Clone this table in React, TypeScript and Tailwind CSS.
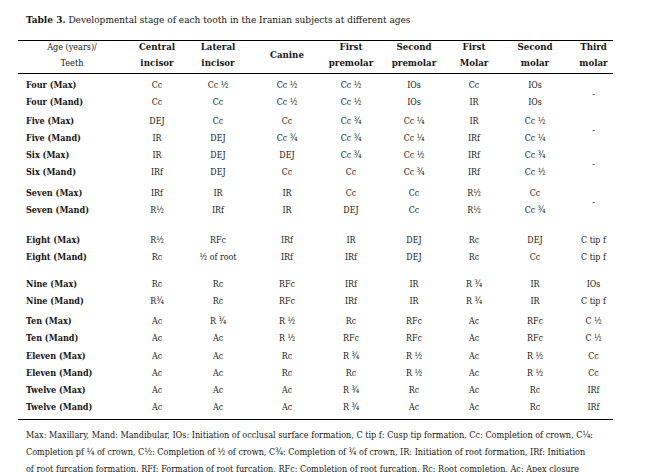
import React from "react";

type Group = {
  mt: string;
  rows: string[][];
  third: string | [string, string];
};

const groups: Group[] = [
  {
    mt: "mt-[3px]",
    rows: [
      ["Four (Max)", "Cc", "Cc ½", "Cc ½", "Cc ½", "IOs", "Cc", "IOs"],
      ["Four (Mand)", "Cc", "Cc", "Cc ½", "Cc ½", "IOs", "IR", "IOs"],
    ],
    third: "-",
  },
  {
    mt: "mt-[2px]",
    rows: [
      ["Five (Max)", "DEJ", "Cc", "Cc", "Cc ¾", "Cc ¼", "IR", "Cc ½"],
      ["Five (Mand)", "IR", "DEJ", "Cc ¾", "Cc ¾", "Cc ¼", "IRf", "Cc ¼"],
    ],
    third: "-",
  },
  {
    mt: "mt-0",
    rows: [
      ["Six (Max)", "IR", "DEJ", "DEJ", "Cc ¾", "Cc ½", "IRf", "Cc ¾"],
      ["Six (Mand)", "IRf", "DEJ", "Cc", "Cc", "Cc ¾", "IRf", "Cc ½"],
    ],
    third: "-",
  },
  {
    mt: "mt-[4px]",
    rows: [
      ["Seven (Max)", "IRf", "IR", "IR", "Cc", "Cc", "R½", "Cc"],
      ["Seven (Mand)", "R½", "IRf", "IR", "DEJ", "Cc", "R½", "Cc ¾"],
    ],
    third: "-",
  },
  {
    mt: "mt-[13px]",
    rows: [
      ["Eight (Max)", "R½", "RFc", "IRf", "IR", "DEJ", "Rc", "DEJ"],
      ["Eight (Mand)", "Rc", "½ of root", "IRf", "IRf", "DEJ", "Rc", "Cc"],
    ],
    third: ["C tip f", "C tip f"],
  },
  {
    mt: "mt-[10px]",
    rows: [
      ["Nine (Max)", "Rc", "Rc", "RFc", "IRf", "IR", "R ¾", "IR"],
      ["Nine (Mand)", "R¾", "Rc", "RFc", "IRf", "IR", "R ¾", "IR"],
    ],
    third: ["IOs", "C tip f"],
  },
  {
    mt: "mt-[3px]",
    rows: [
      ["Ten (Max)", "Ac", "R ¾", "R ½", "Rc", "RFc", "Ac", "RFc"],
      ["Ten (Mand)", "Ac", "Ac", "R ½", "RFc", "RFc", "Ac", "RFc"],
    ],
    third: ["C ½", "C ½"],
  },
  {
    mt: "mt-[1px]",
    rows: [
      ["Eleven (Max)", "Ac", "Ac", "Rc", "R ¾", "R ½", "Ac", "R ½"],
      ["Eleven (Mand)", "Ac", "Ac", "Rc", "Rc", "R ½", "Ac", "R ½"],
    ],
    third: ["Cc", "Cc"],
  },
  {
    mt: "mt-0",
    rows: [
      ["Twelve (Max)", "Ac", "Ac", "Ac", "R ¾", "Rc", "Ac", "Rc"],
      ["Twelve (Mand)", "Ac", "Ac", "Ac", "R ¾", "Ac", "Ac", "Rc"],
    ],
    third: ["IRf", "IRf"],
  },
];

const cols =
  "grid grid-cols-[108px_62px_60px_78px_50px_76px_44px_78px_39px]";

function Row({ cells }: { cells: string[] }) {
  return (
    <>
      <div className="pl-[8px] font-bold text-[9px] whitespace-nowrap">
        {cells[0]}
      </div>
      {cells.slice(1).map((c, i) => (
        <div key={i} className="text-center whitespace-nowrap">
          {c}
        </div>
      ))}
    </>
  );
}

export default function App() {
  return (
    <div className="w-[658px] h-[472px] bg-white text-[#151515] pt-[13px] overflow-hidden [font-family:'DejaVu_Serif_Condensed','DejaVu_Serif',serif] [font-stretch:condensed]">
      <div className="pl-[26px] text-[10px] leading-[14px] whitespace-nowrap">
        <span className="font-bold">Table 3.</span> Developmental stage of each
        tooth in the Iranian subjects at different ages
      </div>

      <div className="ml-[18px] mt-[13px] w-[595px] text-[8.8px]">
        <div
          className={`${cols} h-[34px] border-t-[1.5px] border-b-[1.5px] border-black leading-[12px]`}
        >
          <div className="flex flex-col items-center gap-[4px] text-[9px]">
            <span>Age (years)/</span>
            <span>Teeth</span>
          </div>
          <div className="flex flex-col items-center gap-[4px] font-bold text-[9.6px]">
            <span>Central</span>
            <span>incisor</span>
          </div>
          <div className="flex flex-col items-center gap-[4px] font-bold text-[9.6px]">
            <span>Lateral</span>
            <span>incisor</span>
          </div>
          <div className="flex flex-col items-center pt-[8px] font-bold text-[9.6px]">
            <span>Canine</span>
          </div>
          <div className="flex flex-col items-center gap-[4px] font-bold text-[9.6px]">
            <span>First</span>
            <span>premolar</span>
          </div>
          <div className="flex flex-col items-center gap-[4px] font-bold text-[9.6px]">
            <span>Second</span>
            <span>premolar</span>
          </div>
          <div className="flex flex-col items-center gap-[4px] font-bold text-[9.6px]">
            <span>First</span>
            <span>Molar</span>
          </div>
          <div className="flex flex-col items-center gap-[4px] font-bold text-[9.6px]">
            <span>Second</span>
            <span>molar</span>
          </div>
          <div className="flex flex-col items-center gap-[4px] font-bold text-[9.6px]">
            <span>Third</span>
            <span>molar</span>
          </div>
        </div>

        <div className="pb-[3px] border-b-[1.5px] border-black">
          {groups.map((g, gi) => (
            <div
              key={gi}
              className={`${cols} grid-rows-[17px_17px] leading-[17px] ${g.mt}`}
            >
              <Row cells={g.rows[0]} />
              {typeof g.third === "string" ? (
                <div className="row-span-2 flex items-center justify-center">
                  {g.third}
                </div>
              ) : (
                <div className="text-center whitespace-nowrap">
                  {g.third[0]}
                </div>
              )}
              <Row cells={g.rows[1]} />
              {typeof g.third !== "string" && (
                <div className="text-center whitespace-nowrap">
                  {g.third[1]}
                </div>
              )}
            </div>
          ))}
        </div>
      </div>

      <div className="pl-[26px] mt-[7px] text-[9px] leading-[17px] whitespace-nowrap">
        <div>
          Max: Maxillary, Mand: Mandibular, IOs: Initiation of occlusal surface
          formation, C tip f: Cusp tip formation, Cc: Completion of crown, C¼:
        </div>
        <div>
          Completion pf ¼ of crown, C½: Completion of ½ of crown, C¾: Completion
          of ¾ of crown, IR: Initiation of root formation, IRf: Initiation
        </div>
        <div>
          of root furcation formation, RFf: Formation of root furcation, RFc:
          Completion of root furcation, Rc: Root completion, Ac: Apex closure
        </div>
      </div>
    </div>
  );
}
